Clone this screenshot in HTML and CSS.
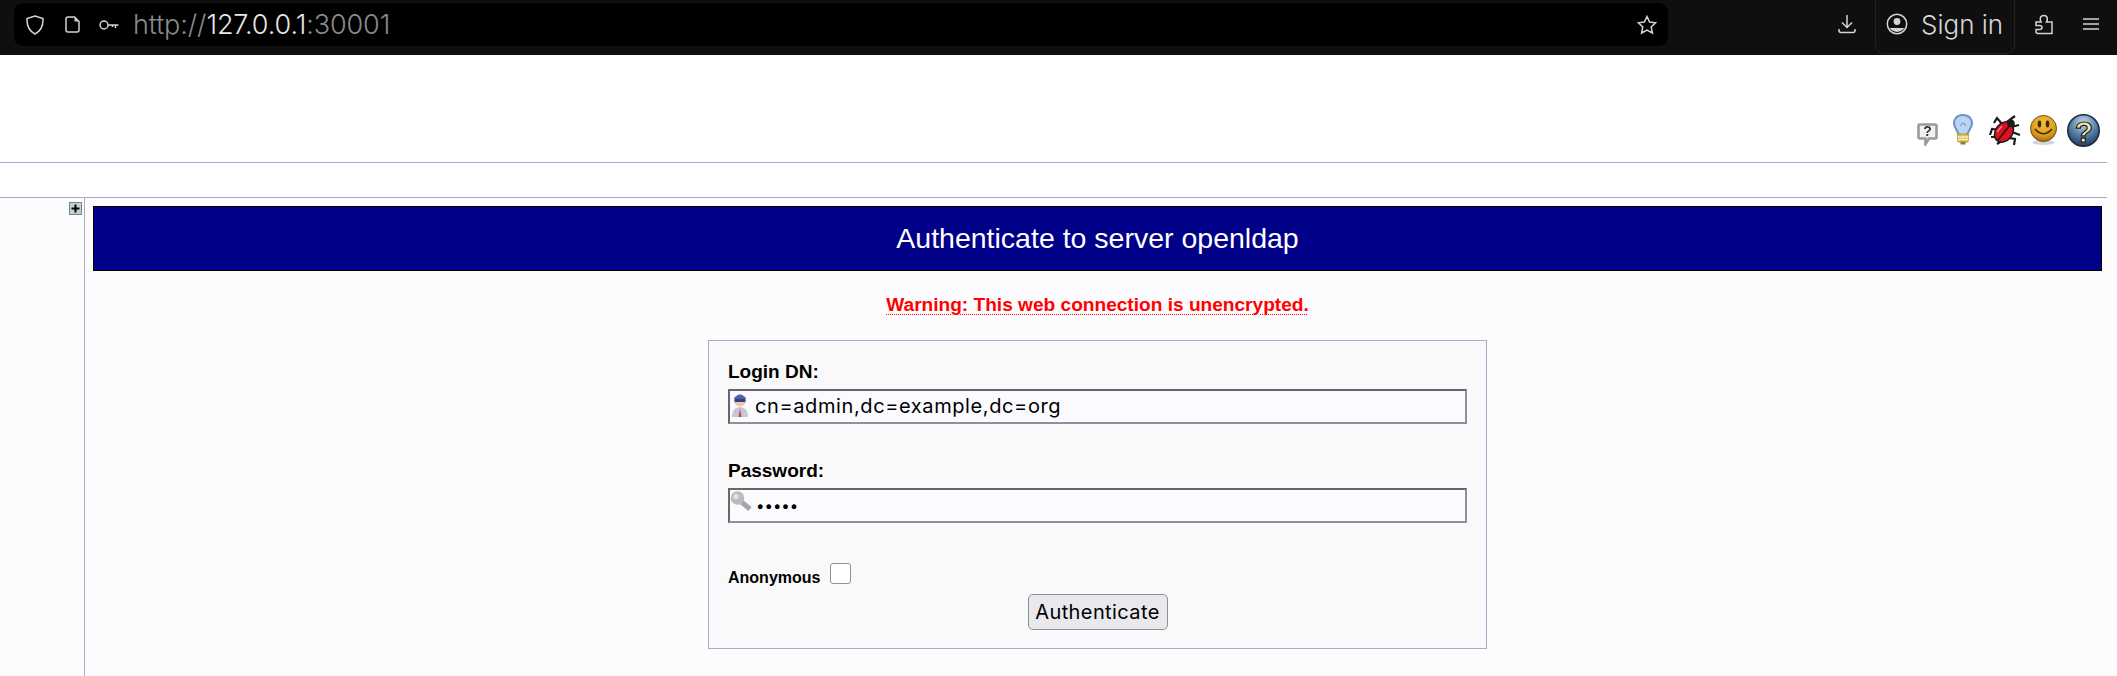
FILE: index.html
```html
<!DOCTYPE html>
<html lang="en">
<head>
<meta charset="utf-8">
<title>phpLDAPadmin</title>
<link rel="stylesheet" href="styles.css">
</head>
<body>
<header class="browser">
  <div class="urlbar">
    <svg class="ic shield" viewBox="0 0 18 20"><path d="M9 1 L17 3.5 C17.3 11 15 16 9 19 C3 16 .7 11 1 3.5 Z"/></svg>
    <svg class="ic file" viewBox="0 0 15 17"><path d="M3 1 H9.5 L14 5.5 V14 Q14 16 12 16 H3 Q1 16 1 14 V3 Q1 1 3 1 Z"/><path class="fill" d="M9.5 1 L14 5.5 H9.5 Z"/></svg>
    <svg class="ic key" viewBox="0 0 20 10"><circle cx="5" cy="5" r="4"/><path d="M9 5 H19.5 M16.5 5 V8 M13.5 5 V7"/></svg>
    <div class="url"><span class="dim">http://</span><span>127.0.0.1</span><span class="dim">:30001</span></div>
    <svg class="ic star" viewBox="0 0 20 20"><path d="M10 1.5 L12.6 7 L18.6 7.8 L14.2 12 L15.4 18 L10 15 L4.6 18 L5.8 12 L1.4 7.8 L7.4 7 Z"/></svg>
  </div>
  <div class="tools">
    <svg class="ic download" viewBox="0 0 18 20"><path d="M9 1 V13 M4 8.5 L9 13.5 L14 8.5 M1 15 V16.5 Q1 18.5 3 18.5 H15 Q17 18.5 17 16.5 V15"/></svg>
    <div class="signin">
      <svg class="ic person" viewBox="0 0 22 22"><circle cx="11" cy="11" r="9.7"/><circle class="fill" cx="11" cy="8.5" r="3.4"/><path class="fill" d="M3.6 15 H18.4 A9 9 0 0 1 3.6 15 Z"/></svg>
      <span>Sign in</span>
    </div>
    <svg class="ic puzzle" viewBox="0 0 18 21"><path d="M1 8 H6 Q5 6.5 5.3 4.5 C5.7 .5 12 .5 12.3 4.5 Q12.5 6.5 11.5 8 H17 V19.5 H3 Q1 19.5 1 17.5 V15.5 H4.5 Q7 15.5 7 13.5 Q7 11.5 4.5 11.5 H1 Z"/></svg>
    <svg class="ic menu" viewBox="0 0 16 12"><path d="M0 1 H16 M0 6 H16 M0 11 H16"/></svg>
  </div>
</header>

<nav class="icons">
  <svg class="i-comment" viewBox="0 0 21 23"><path d="M3 1.500 H18 Q19.500 1.500 19.500 3 V14 Q19.500 15.500 18 15.500 H12 L8.500 21 V15.500 H3 Q1.500 15.500 1.500 14 V3 Q1.500 1.500 3 1.500 Z" fill="#f0f0f0" stroke="#9a9a9a" stroke-width="2.600"/><text x="10.500" y="13" text-anchor="middle" class="glyph-q">?</text></svg>
  <svg class="i-bulb" viewBox="0 0 20 31"><path d="M10 1 C4 1 1 5 1 9.500 C1 14 5 16 5.500 21 H14.500 C15 16 19 14 19 9.500 C19 5 16 1 10 1 Z" fill="#bcd4f2" stroke="#6f8fcb" stroke-width="2"/><path d="M7.500 12 Q10 6 12.500 12" fill="none" stroke="#7f9bc8" stroke-width="1.200"/><rect x="4.500" y="20" width="11" height="8" rx="1.500" fill="#dcc050" stroke="#a8923a"/><path d="M4.500 23 H15.500 M4.500 25.500 H15.500" stroke="#f4eeb4" stroke-width="1.300"/><rect x="7.500" y="28" width="5" height="2.500" fill="#8a7f40"/></svg>
  <svg class="i-bug" viewBox="0 0 33 32"><g stroke="#1c1c1c" stroke-width="2.200" fill="none"><path d="M15 10 L9 3 L6 8 M12 15 L4 14 L2 20 M12 22 L3 22 M15 25 L9 29 M19 7 L27 1 M23 12 L31 10 M24 17 L32 20 M21 23 L27 24 L26 30"/></g><ellipse cx="16" cy="17" rx="8.500" ry="11" transform="rotate(38 16 17)" fill="#e0101c" stroke="#1c1c1c" stroke-width="1.500"/><path d="M10 25 L22 10" stroke="#1c1c1c" stroke-width="1.800"/><circle cx="23" cy="8.500" r="3.800" fill="#1c1c1c"/><path d="M9 17 L14 11" stroke="#f08088" stroke-width="1.500"/></svg>
  <svg class="i-smile" viewBox="0 0 27 30"><defs><radialGradient id="sg" cx=".5" cy=".3" r=".7"><stop offset="0" stop-color="#f5c040"/><stop offset=".7" stop-color="#dc9a1c"/><stop offset="1" stop-color="#a06a10"/></radialGradient></defs><ellipse cx="13.500" cy="27.500" rx="11" ry="2.500" fill="#d4d4d4"/><circle cx="13.500" cy="13.500" r="13" fill="url(#sg)" stroke="#6b5223" stroke-width="1"/><ellipse cx="9.500" cy="9" rx="1.800" ry="3.400" fill="#3c2a08"/><ellipse cx="17.500" cy="9" rx="1.800" ry="3.400" fill="#3c2a08"/><path d="M5 14 Q13.500 23.500 22 14" fill="none" stroke="#3c2a08" stroke-width="1.700"/></svg>
  <svg class="i-help" viewBox="0 0 33 34"><defs><radialGradient id="hg" cx=".5" cy=".25" r=".8"><stop offset="0" stop-color="#c6d8ea"/><stop offset=".55" stop-color="#4f7ba6"/><stop offset="1" stop-color="#1a3350"/></radialGradient></defs><circle cx="16.500" cy="16.500" r="15.700" fill="url(#hg)" stroke="#222e3c" stroke-width="1.600"/><text x="17" y="28" text-anchor="middle" class="glyph-help">?</text></svg>
</nav>
<div class="rule"></div>
<div class="spacer"></div>
<div class="rule"></div>

<main class="layout">
  <aside class="tree">
    <span class="expand"><svg viewBox="0 0 13 13"><rect width="13" height="13" fill="#c4d2d6"/><rect x=".5" y=".5" width="12" height="12" fill="none" stroke="#74858a"/><path d="M6.500 2.500 V10.500 M2.500 6.500 H10.500" stroke="#000" stroke-width="2"/></svg></span>
  </aside>
  <section class="content">
    <h1 class="title">Authenticate to server openldap</h1>
    <p class="warning"><span>Warning: This web connection is unencrypted.</span></p>
    <form class="login">
      <label class="lbl" for="dn">Login DN:</label>
      <div class="field">
        <svg class="f-user" viewBox="0 0 16 24"><path d="M0 24 Q0 14 8 14 Q16 14 16 24 Z" fill="#c3c9d6"/><path d="M8 15 L6.500 24 H9.500 Z" fill="#d9434c"/><circle cx="8" cy="7.500" r="6" fill="#eec5a6"/><path d="M1.500 6 Q8 -3 14.500 6 Z" fill="#4a62ad"/><rect x="2.500" y="6" width="11" height="3" rx="1" fill="#2f3f80"/></svg>
        <input id="dn" class="inp" type="text" value="cn=admin,dc=example,dc=org">
      </div>
      <label class="lbl second" for="pw">Password:</label>
      <div class="field">
        <svg class="f-key" viewBox="0 0 22 20"><path d="M9 9 L20 18" stroke="#a6a6a6" stroke-width="5"/><circle cx="7.500" cy="7" r="6.800" fill="#bcbcbc"/><circle cx="6" cy="5.500" r="2.600" fill="#e2e2e2"/></svg>
        <input id="pw" class="inp pw" type="password" value="admin">
      </div>
      <div class="anon">
        <label class="anon-lbl" for="an">Anonymous</label>
        <input id="an" class="check" type="checkbox">
      </div>
      <div class="actions"><button class="btn" type="button">Authenticate</button></div>
    </form>
  </section>
</main>
</body>
</html>
```

FILE: styles.css
```css
* { box-sizing: border-box; }
html, body { margin: 0; height: 100%; overflow: hidden; }
body { background: #fff; font-family: "Liberation Sans", Arial, sans-serif; color: #000; }

/* browser chrome */
.browser { height: 55px; background: #0f0f10; display: flex; align-items: flex-start; }
.urlbar { margin: 3px 0 0 14px; width: 1654px; height: 43px; background: #000; border-radius: 9px; display: flex; align-items: center; padding: 0 11px 0 12px; }
.ic { fill: none; stroke: #d4d4d6; stroke-width: 1.500; display: block; flex: none; }
.ic .fill { fill: #d4d4d6; stroke: none; }
.shield { width: 18px; height: 20px; }
.file { width: 15px; height: 17px; margin-left: 21px; }
.key { width: 20px; height: 10px; margin-left: 19px; }
.url { margin-left: 14px; font-family: Inter, "Noto Sans", sans-serif; font-weight: 300; font-size: 27px; letter-spacing: -.1px; color: #e6e6e6; white-space: nowrap; flex: 1; }
.url .dim { color: #8a8a8a; }
.star { width: 20px; height: 20px; }
.tools { flex: 1; display: flex; align-items: center; height: 48px; padding-left: 170px; }
.download { width: 18px; height: 20px; }
.signin { align-self: flex-start; width: 140px; height: 55px; margin: -1px 0 0 19px; border: 1px solid #222224; border-top: 0; border-radius: 0 0 9px 9px; display: flex; align-items: center; padding: 0 0 4px 10px; color: #d8d8da; font-family: Inter, "Noto Sans", sans-serif; font-weight: 300; font-size: 26px; white-space: nowrap; }
.person { width: 22px; height: 22px; margin-right: 13px; }
.puzzle { width: 18px; height: 21px; margin-left: 20px; }
.menu { width: 16px; height: 12px; margin-left: 30px; }

/* application icons */
.icons { height: 107px; padding: 59px 17px 0 0; display: flex; justify-content: flex-end; align-items: flex-start; }
.icons svg { display: block; flex: none; filter: blur(.45px); }
.i-comment { width: 21px; height: 23px; margin-top: 9px; }
.i-bulb { width: 20px; height: 31px; margin-left: 15px; }
.i-bug { width: 33px; height: 32px; margin-left: 15px; margin-top: 1px; }
.i-smile { width: 27px; height: 30px; margin-left: 9px; margin-top: 1px; }
.i-help { width: 33px; height: 34px; margin-left: 10px; }
.glyph-q { font: bold 14px "Liberation Sans", sans-serif; fill: #333; }
.glyph-help { font: bold 30px "Liberation Sans", sans-serif; fill: #efe3a8; stroke: #1c1c1c; stroke-width: 1.200; }

.rule { height: 1px; width: 2107px; background: #aaaacc; }
.spacer { height: 34px; }

/* layout */
.layout { display: flex; height: 478px; background: #fcfcfe; }
.tree { width: 85px; flex: none; border-right: 1px solid #aaaacc; display: flex; justify-content: flex-end; padding: 4px 2px 0 0; }
.expand { display: block; width: 13px; height: 13px; }
.expand svg { display: block; width: 13px; height: 13px; }
.content { flex: 1; padding: 8px 15px 0 8px; min-width: 0; }
.title { margin: 0; height: 65px; background: #000088; border: 1px solid #000; color: #fff; font-weight: 400; font-size: 28.500px; line-height: 63px; text-align: center; }
.warning { margin: 22px 0 0; height: 47px; text-align: center; color: #f00; font-weight: 700; font-size: 19.100px; line-height: 24px; }
.warning span { text-decoration: underline dotted 1px; text-underline-offset: 3px; }

/* login form */
.login { width: 779px; height: 309px; margin: 0 auto; background: #f9f9f9; border: 1px solid #aaaacc; padding: 19px 19px 0 19px; }
.lbl { display: block; font-weight: 700; font-size: 19px; line-height: 24px; height: 29px; }
.lbl.second { margin-top: 35px; }
.field { position: relative; height: 35px; }
.inp { display: block; width: 739px; height: 35px; background: #fbfaff; border: 2px solid; border-color: #66666e #8f8f9d #8f8f9d #66666e; padding: 0 0 1px 25px; margin: 0; font-family: Inter, "Noto Sans", sans-serif; font-size: 20px; letter-spacing: .6px; color: #000; outline: 0; }
.inp.pw { letter-spacing: 0; font-size: 15px; padding-left: 26px; }
.field svg { position: absolute; display: block; filter: blur(.3px); }
.f-user { left: 4px; top: 4px; width: 16px; height: 24px; }
.f-key { left: 2px; top: 3px; width: 22px; height: 20px; }
.anon { display: flex; align-items: flex-end; margin-top: 40px; height: 21px; }
.anon-lbl { font-weight: 700; font-size: 16px; line-height: 18px; margin-bottom: -3px; }
.check { appearance: none; width: 21px; height: 21px; margin: 0 0 0 10px; background: #fff; border: 1px solid #8f8f9d; border-radius: 3px; }
.actions { margin-top: 10px; text-align: center; }
.btn { width: 140px; height: 36px; padding: 0; background: #e9e9ed; border: 1px solid #8f8f9d; border-radius: 5px; font-family: Inter, "Noto Sans", sans-serif; font-size: 20px; letter-spacing: .4px; color: #000; }
```
